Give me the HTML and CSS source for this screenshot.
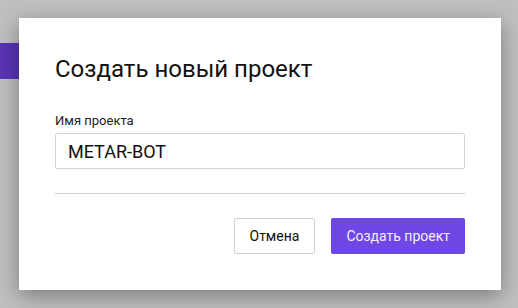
FILE: index.html
```html
<!DOCTYPE html>
<html lang="ru">
<head>
    <meta charset="UTF-8">
    <title>Создать новый проект</title>
    <link rel="stylesheet" href="styles.css">
</head>
<body>
    <div class="page-bar"></div>
    <div class="overlay">
        <div class="dialog">
            <h2 class="dialog-title">Создать новый проект</h2>
            <label class="field-label" for="projectName">Имя проекта</label>
            <input class="field-input" id="projectName" type="text" value="METAR-BOT">
            <hr class="divider">
            <div class="actions">
                <button class="btn btn-cancel">Отмена</button>
                <button class="btn btn-primary">Создать проект</button>
            </div>
        </div>
    </div>
</body>
</html>
```

FILE: styles.css
```css
* {
    margin: 0;
    padding: 0;
    box-sizing: border-box;
    font-family: 'Roboto', sans-serif;
}

body {
    background-color: #bfbfbf;
    min-height: 100vh;
    overflow: hidden;
}

.page-bar {
    position: absolute;
    left: 0;
    top: 43px;
    width: 40px;
    height: 36px;
    background-color: #5934b4;
}

.overlay {
    position: absolute;
    inset: 0;
    display: flex;
    align-items: center;
    justify-content: center;
    padding-left: 2px;
}

.dialog {
    width: 482px;
    background-color: #ffffff;
    padding: 36px;
    box-shadow: 0 6px 20px rgba(0, 0, 0, 0.35);
    display: flex;
    flex-direction: column;
}

.dialog-title {
    font-size: 24px;
    font-weight: 400;
    line-height: 30px;
    color: #111111;
    margin-bottom: 29px;
}

.field-label {
    font-size: 13px;
    line-height: 16px;
    color: #222222;
    margin-bottom: 4px;
}

.field-input {
    height: 36px;
    border: 1px solid #d4d4d4;
    border-radius: 2px;
    padding: 0 12px;
    font-size: 18px;
    color: #111111;
    outline: none;
}

.divider {
    border: none;
    border-top: 1px solid #d0d0d0;
    margin: 24px 0;
}

.actions {
    display: flex;
    justify-content: flex-end;
    gap: 16px;
}

.btn {
    height: 36px;
    padding: 0 15px;
    font-size: 14px;
    border-radius: 2px;
    cursor: pointer;
}

.btn-cancel {
    background-color: #ffffff;
    border: 1px solid #cfcfcf;
    color: #111111;
}

.btn-primary {
    background-color: #6f47e4;
    border: none;
    color: #f3efff;
}
```
